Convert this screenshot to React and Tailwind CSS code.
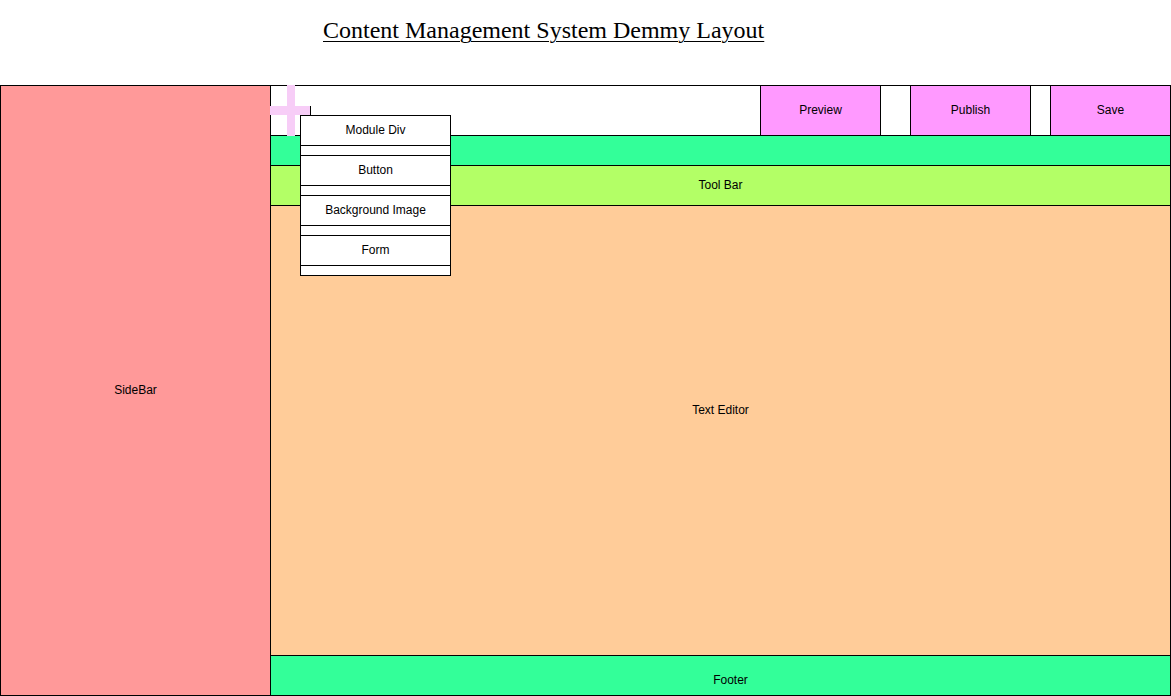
import React from 'react';

const sans = { fontFamily: '"Liberation Sans", Arial, sans-serif' };

function Cross() {
  return (
    <svg className="absolute left-[270px] top-[85px]" width="41" height="51" viewBox="0 0 41 51">
      <path d="M17 0 H25 V21 H40 V30 H25 V51 H17 V30 H0 V21 H17 Z" fill="#f7cdf7" />
      <line x1="40.5" y1="21" x2="40.5" y2="30" stroke="#000" strokeWidth="1" />
    </svg>
  );
}

function ModuleMenu() {
  const items = ['Module Div', 'Button', 'Background Image', 'Form'];
  return (
    <div className="absolute left-[300px] top-[115px] w-[151px] bg-white border-t border-l border-r border-black text-[12px] text-black" style={sans}>
      {items.map((label) => (
        <React.Fragment key={label}>
          <div className="h-[30px] pb-[2px] border-b border-black flex items-center justify-center">{label}</div>
          <div className="h-[10px] border-b border-black" />
        </React.Fragment>
      ))}
    </div>
  );
}

export default function App() {
  return (
    <div className="relative w-[1171px] h-[696px] bg-white overflow-hidden text-black" style={sans}>
      {/* Title */}
      <div className="h-[85px] pl-[323px] pt-[16px]">
        <h1 className="text-[24px] leading-[28px] underline underline-offset-[3px] decoration-1" style={{ fontFamily: '"Liberation Serif", "Times New Roman", serif' }}>
          Content Management System Demmy Layout
        </h1>
      </div>

      <div className="flex text-[12px]">
        {/* Sidebar */}
        <div className="w-[271px] h-[611px] pb-[2px] bg-[#ff9999] border border-black flex items-center justify-center">
          SideBar
        </div>

        {/* Main column */}
        <div className="w-[900px] h-[611px] flex flex-col border-t border-r border-b border-black">
          {/* Header */}
          <div className="h-[50px] border-b border-black bg-white flex justify-end">
            <div className="w-[121px] pb-[2px] bg-[#ff99ff] border-l border-r border-black flex items-center justify-center">Preview</div>
            <div className="w-[121px] pb-[2px] ml-[29px] bg-[#ff99ff] border-l border-r border-black flex items-center justify-center">Publish</div>
            <div className="w-[120px] pb-[2px] ml-[19px] bg-[#ff99ff] border-l border-black flex items-center justify-center">Save</div>
          </div>
          <div className="h-[30px] border-b border-black bg-[#33ff99]" />
          <div className="h-[40px] pb-[2px] border-b border-black bg-[#b3ff66] flex items-center justify-center">Tool Bar</div>
          <div className="h-[450px] border-b border-black bg-[#ffcc99] flex items-center justify-center pb-[42px]">Text Editor</div>
          <div className="flex-1 bg-[#33ff99] flex items-center justify-center pt-[8px] pl-[20px]">Footer</div>
        </div>
      </div>

      <Cross />
      <ModuleMenu />
    </div>
  );
}
